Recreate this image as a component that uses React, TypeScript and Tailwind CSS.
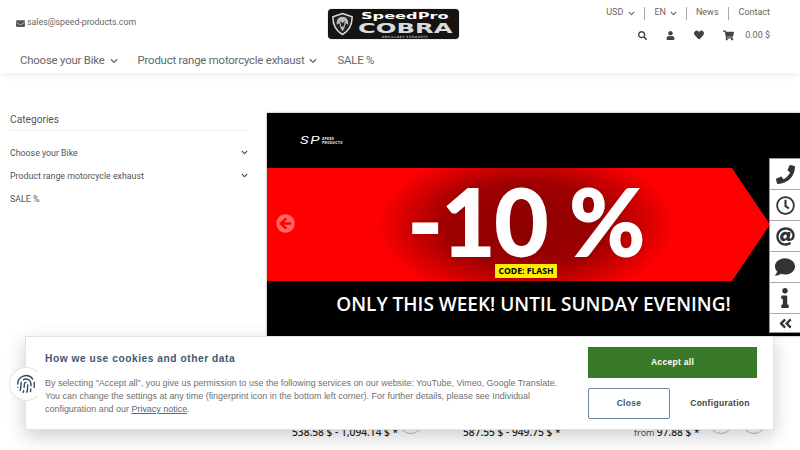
import { Fingerprint } from "lucide-react";
import {
  FaEnvelope, FaChevronDown, FaSearch, FaUser, FaHeart, FaShoppingCart, FaPhone, FaRegClock, FaAt,
  FaComment, FaInfo, FaAngleDoubleLeft, FaArrowCircleLeft,
} from "react-icons/fa";

const ui = "font-['Roboto',sans-serif]";

function Logo() {
  return (
    <div className="w-[131px] h-[30px] bg-[#141414] rounded-[4px] flex items-center pl-[4px] gap-[3px] overflow-hidden shadow-[0_0_1px_#555]">
      <svg width="21" height="24" viewBox="0 0 26 28" className="shrink-0">
        <path d="M13 1 L25 5 C25 15 20 23 13 27 C6 23 1 15 1 5 Z" fill="#222" stroke="#ddd" strokeWidth="1.8" />
        <path d="M13 5 C18 5 21 9 20 15 L17 13 L15 20 L13 23 L11 20 L9 13 L6 15 C5 9 8 5 13 5 Z" fill="#bbb" />
        <path d="M10 10 L13 13 L16 10 L14.5 17 L11.5 17 Z" fill="#222" />
      </svg>
      <div className="w-[99px] flex flex-col items-center font-['DejaVu_Sans',sans-serif] font-bold text-white leading-none">
        <span className="text-[9.5px] h-[11px] leading-[11px] scale-x-[1.7] inline-block">SpeedPro</span>
        <span className="text-[13.5px] h-[14px] leading-[14px] text-[#dcdcdc] scale-x-[1.8] inline-block">COBRA</span>
        <span className="text-[3px] h-[4px] leading-[4px] text-[#aaa] tracking-[.5px]">ANCILLARY EXHAUSTS</span>
      </div>
    </div>
  );
}

function Header() {
  return (
    <header className="h-[73px] shadow-[0_2px_8px_rgba(0,0,0,0.07)] text-[#666] bg-white">
      <div className="h-[49px] flex">
        <div className="flex-1 flex items-center pl-[16px] pb-[3px] gap-[2px] text-[8.8px] text-[#666]">
          <FaEnvelope className="w-[9px] h-[9px] text-[#555]" />
          <span>sales@speed-products.com</span>
        </div>
        <div className="w-[131px] pt-[9px]"><Logo /></div>
        <div className="flex-1 flex flex-col items-end pr-[30px] pt-[6px]">
          <div className="flex items-center h-[14px] text-[9px]">
            <span>USD</span><FaChevronDown className="w-[7px] h-[7px] ml-[5px]" />
            <span className="w-px h-[13px] bg-[#aaa] ml-[9px] mr-[9px]" />
            <span>EN</span><FaChevronDown className="w-[7px] h-[7px] ml-[4px]" />
            <span className="w-px h-[13px] bg-[#aaa] ml-[9px] mr-[9px]" />
            <span>News</span>
            <span className="w-px h-[13px] bg-[#aaa] ml-[9px] mr-[10px]" />
            <span>Contact</span>
          </div>
          <div className="flex items-center h-[16px] mt-[7px] text-[#444]">
            <FaSearch className="w-[9px] h-[9px]" />
            <FaUser className="w-[9px] h-[9px] ml-[19px]" />
            <FaHeart className="w-[10px] h-[10px] ml-[19px]" />
            <FaShoppingCart className="w-[11px] h-[11px] ml-[19px]" />
            <span className="ml-[11px] text-[9px] text-[#666] pt-[1px]">0.00 $</span>
          </div>
        </div>
      </div>
      <nav className="flex items-center pl-[20px] text-[11.4px] tracking-[-0.2px] text-[#666] h-[24px]">
        <span>Choose your Bike</span><FaChevronDown className="w-[8px] h-[8px] ml-[5px]" />
        <span className="ml-[20px]">Product range motorcycle exhaust</span><FaChevronDown className="w-[8px] h-[8px] ml-[5px]" />
        <span className="ml-[20px]">SALE %</span>
      </nav>
    </header>
  );
}

function Sidebar() {
  const rows: [string, boolean][] = [["Choose your Bike", true], ["Product range motorcycle exhaust", true], ["SALE %", false]];
  return (
    <aside className="w-[238px] ml-[10px] pt-[39px] shrink-0 text-[#555]">
      <div className="text-[10.2px] h-[19px] leading-[15px] border-b border-[#eee]">Categories</div>
      <div className="mt-[11px] text-[8.8px]">
        {rows.map(([t, c]) => (
          <div key={t} className="h-[23px] flex items-center justify-between">
            <span>{t}</span>
            {c && <FaChevronDown className="w-[7px] h-[7px] text-[#444] -mt-[2px]" />}
          </div>
        ))}
      </div>
    </aside>
  );
}

function Banner() {
  return (
    <div className="w-[533px] h-[223px] bg-black flex flex-col shadow-[0_0_2px_#888] relative">
      <div className="h-[55px] flex items-center pl-[33px] text-white">
        <span className="italic font-normal text-[10px] leading-none tracking-[1px] scale-x-[1.5] origin-left inline-block w-[20px]">SP</span>
        <span className="ml-[2px] text-[3.5px] leading-[4px] font-bold tracking-[.4px] w-[26px] italic">SPEED PRODUCTS</span>
      </div>
      <div className="relative w-[503px] h-[113px] [clip-path:polygon(0_0,465px_0,100%_50%,465px_100%,0_100%)] bg-[radial-gradient(ellipse_150px_78px_at_259px_57px,#8c0000_0%,#a00000_55%,#ff0000_100%)] flex items-center pl-[141px] text-white font-bold text-[92px] tracking-[-0.5px] [-webkit-text-stroke:2px_white] whitespace-nowrap [text-shadow:0_0_3px_rgba(80,0,0,0.6)] font-['Lato',sans-serif]">
        <span className="-mt-[7px] inline-block h-[68px] leading-[68px]">-10 %</span>
        <span className="absolute left-[228px] top-[96px] h-[14px] w-[62px] bg-[#ffee00] text-black text-[8.6px] font-bold tracking-normal [-webkit-text-stroke:0] flex items-center justify-center [text-shadow:none] font-['Open_Sans',sans-serif]">CODE: FLASH</span>
      </div>
      <div className="flex-1 flex items-center justify-center text-white text-[19px] font-semibold pb-[8px] font-['Open_Sans',sans-serif]">
        ONLY THIS WEEK! UNTIL SUNDAY EVENING!
      </div>
      <FaArrowCircleLeft className="absolute left-[9px] top-[101px] w-[19px] h-[19px] text-white/40" />
    </div>
  );
}

function Prices() {
  const circle = "rounded-full border border-[#bbb] w-[24px] h-[24px] shrink-0";
  return (
    <div className="flex items-center h-[24px] mt-[74px] text-[10.2px] font-medium text-[#222] whitespace-nowrap font-['Noto_Sans',sans-serif]">
      <span className="ml-[25px] w-[107px] pt-[21px]">538.58 $ - 1,094.14 $ *</span>
      <span className={circle} />
      <span className="ml-[40px] w-[171px] pt-[21px]">587.55 $ - 949.75 $ *</span>
      <span className="w-[75px] pt-[21px]"><span className="text-[9px] font-normal text-[#555]">from </span>97.88 $ *</span>
      <span className={circle} />
      <span className={`${circle} ml-[9px]`} />
    </div>
  );
}

function SideDock() {
  const items = [
    [FaPhone, "h-[31px]", "w-[19px] h-[19px]"],
    [FaRegClock, "h-[31px]", "w-[19px] h-[19px]"],
    [FaAt, "h-[31px]", "w-[19px] h-[19px]"],
    [FaComment, "h-[31px]", "w-[20px] h-[20px]"],
    [FaInfo, "h-[31px]", "w-[20px] h-[20px]"],
    [FaAngleDoubleLeft, "h-[18px]", "w-[15px] h-[15px]"],
  ] as const;
  return (
    <div className="absolute right-0 top-[158px] w-[31px] bg-white flex flex-col border-l border-t border-b border-[#999] text-[#333]">
      {items.map(([Icon, h, s], i) => (
        <div key={i} className={`${h} flex items-center justify-center ${i < 5 ? "border-b border-[#aaa]" : ""}`}>
          <Icon className={s} />
        </div>
      ))}
    </div>
  );
}

function Cookie() {
  return (
    <>
      <div className="absolute left-[25px] top-[336px] w-[749px] h-[94px] bg-white border border-[#e2e2e2] shadow-[0_6px_18px_rgba(0,0,0,0.2)] z-20 flex font-['Liberation_Sans',sans-serif]">
        <div className="w-[562px] pl-[19px] pt-[14px]">
          <h2 className="text-[10.2px] font-bold tracking-[.55px] text-[#3f5870] leading-[15px]">How we use cookies and other data</h2>
          <p className="mt-[11px] text-[8.95px] leading-[13px] text-[#707070] whitespace-nowrap">
            By selecting "Accept all", you give us permission to use the following services on our website: YouTube, Vimeo, Google Translate.<br />
            You can change the settings at any time (fingerprint icon in the bottom left corner). For further details, please see Individual<br />
            configuration and our <span className="underline text-[#4d6a85]">Privacy notice</span>.
          </p>
        </div>
        <div className="pt-[10px] w-[169px] flex flex-col">
          <div className="h-[31px] bg-[#387a29] text-white text-[8.5px] font-bold tracking-[.3px] flex items-center justify-center">Accept all</div>
          <div className="flex mt-[10px]">
            <div className="w-[82px] h-[31px] rounded-[2px] border border-[#6f8599] text-[#3f5870] text-[8.5px] font-bold tracking-[.3px] flex items-center justify-center">Close</div>
            <div className="flex-1 h-[31px] text-[#444] text-[8.5px] font-bold tracking-[.3px] flex items-center justify-center pl-[13px]">Configuration</div>
          </div>
        </div>
      </div>
      <div className="absolute left-[9px] top-[367px] w-[34px] h-[34px] rounded-full bg-white border border-[#e4e4e4] border-r-transparent flex items-center justify-center text-[#2f4a62] z-30">
        <Fingerprint className="w-[20px] h-[20px]" strokeWidth={1.7} />
      </div>
    </>
  );
}

export default function App() {
  return (
    <div className={`relative w-[800px] h-[450px] overflow-hidden bg-white ${ui}`}>
      <Header />
      <main className="flex">
        <Sidebar />
        <div className="ml-[19px] pt-[40px]">
          <Banner />
          <Prices />
        </div>
      </main>
      <SideDock />
      <Cookie />
    </div>
  );
}
